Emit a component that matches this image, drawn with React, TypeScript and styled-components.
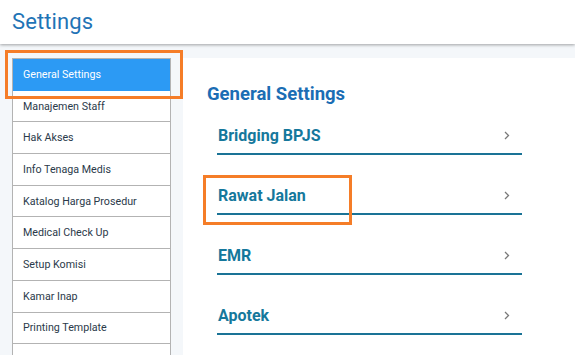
import React from "react";
import styled, { createGlobalStyle } from "styled-components";

const Global = createGlobalStyle`
  html, body { margin: 0; padding: 0; }
  body {
    background: #f4f7fa;
    font-family: Roboto, "Noto Sans", Arial, sans-serif;
    width: 575px;
    height: 355px;
    overflow: hidden;
  }
  * { box-sizing: border-box; }
`;

const Page = styled.div`
  position: relative;
  width: 575px;
  height: 355px;
  overflow: hidden;
`;

const Header = styled.header`
  height: 44px;
  background: #ffffff;
  box-shadow: 0 1px 3px rgba(0, 0, 0, 0.35);
  display: flex;
  align-items: center;
  padding: 0 0 1px 12px;
  position: relative;
  z-index: 1;
`;

const Title = styled.h1`
  margin: 0;
  font-size: 22px;
  font-weight: 400;
  color: #1f74b6;
  letter-spacing: 0.1px;
`;

const Body = styled.div`
  display: flex;
  padding-top: 14px;
  height: 311px;
`;

const Sidebar = styled.nav`
  width: 183px;
  padding-left: 12px;
  flex-shrink: 0;
`;

const List = styled.ul`
  list-style: none;
  margin: 0;
  padding: 0;
  width: 159px;
  border: 1px solid #b3b3b3;
  border-bottom: none;
  background: #ffffff;
`;

const Item = styled.li<{ $active?: boolean }>`
  height: 31.7px;
  display: flex;
  align-items: center;
  padding-left: 10px;
  font-size: 10.7px;
  color: ${(p) => (p.$active ? "#ffffff" : "#2b3a4a")};
  background: ${(p) => (p.$active ? "#2c9af4" : "#ffffff")};
  border-bottom: 1px solid ${(p) => (p.$active ? "#2c9af4" : "#b3b3b3")};
`;

const Main = styled.main`
  flex: 1;
  background: #ffffff;
  padding: 26px 0 0 24px;
`;

const Heading = styled.h2`
  margin: 0;
  font-size: 18.5px;
  line-height: 20px;
  font-weight: 700;
  color: #1b6db4;
`;

const Options = styled.div`
  display: flex;
  flex-direction: column;
  gap: 24px;
  margin: 15px 0 0 10px;
  width: 305px;
`;

const Option = styled.div`
  height: 36px;
  display: flex;
  align-items: center;
  justify-content: space-between;
  border-bottom: 2px solid #1a7396;
  padding: 0 12px 2px 1px;
`;

const OptionLabel = styled.span`
  font-size: 16px;
  font-weight: 700;
  color: #15789c;
`;

const Highlight = styled.div<{ $x: number; $y: number; $w: number; $h: number }>`
  position: absolute;
  left: ${(p) => p.$x}px;
  top: ${(p) => p.$y}px;
  width: ${(p) => p.$w}px;
  height: ${(p) => p.$h}px;
  border: 3px solid #f57d28;
  pointer-events: none;
  z-index: 2;
`;

const Chevron = () => (
  <svg width="6" height="9" viewBox="0 0 6 9" fill="none">
    <path d="M1 1l3.5 3.5L1 8" stroke="#7a7a7a" strokeWidth="1.3" />
  </svg>
);

const menu = [
  "General Settings",
  "Manajemen Staff",
  "Hak Akses",
  "Info Tenaga Medis",
  "Katalog Harga Prosedur",
  "Medical Check Up",
  "Setup Komisi",
  "Kamar Inap",
  "Printing Template",
  "Paket & Diskon",
];

const options = ["Bridging BPJS", "Rawat Jalan", "EMR", "Apotek"];

export default function App() {
  return (
    <Page>
      <Global />
      <Header>
        <Title>Settings</Title>
      </Header>
      <Body>
        <Sidebar>
          <List>
            {menu.map((m, i) => (
              <Item key={m} $active={i === 0}>
                {m}
              </Item>
            ))}
          </List>
        </Sidebar>
        <Main>
          <Heading>General Settings</Heading>
          <Options>
            {options.map((o) => (
              <Option key={o}>
                <OptionLabel>{o}</OptionLabel>
                <Chevron />
              </Option>
            ))}
          </Options>
        </Main>
      </Body>
      <Highlight $x={5} $y={50} $w={178} $h={49} />
      <Highlight $x={203} $y={175} $w={149} $h={50} />
    </Page>
  );
}
